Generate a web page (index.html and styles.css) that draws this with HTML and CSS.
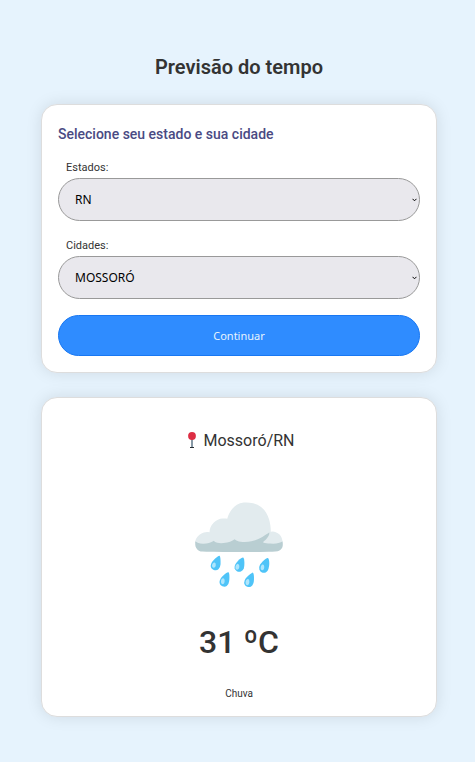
FILE: index.html
```html
<!DOCTYPE html>
<html lang="pt-BR">
<head>
  <meta charset="utf-8">
  <meta name="viewport" content="width=device-width, initial-scale=1">
  <title>Previsão do tempo</title>
  <link rel="stylesheet" href="styles.css">
</head>
<body>
  <main class="page">
    <h1 class="title">Previsão do tempo</h1>
    <form class="card search">
      <h2 class="subtitle">Selecione seu estado e sua cidade</h2>
      <label class="label" for="estado">Estados:</label>
      <div class="field">
        <select class="select" id="estado"><option>RN</option></select>
        <svg class="chevron" viewBox="0 0 5 4" aria-hidden="true"><path d="M.5 .8 2.5 2.8 4.5 .8"/></svg>
      </div>
      <label class="label" for="cidade">Cidades:</label>
      <div class="field">
        <select class="select" id="cidade"><option>MOSSORÓ</option></select>
        <svg class="chevron" viewBox="0 0 5 4" aria-hidden="true"><path d="M.5 .8 2.5 2.8 4.5 .8"/></svg>
      </div>
      <button class="button" type="button">Continuar</button>
    </form>
    <section class="card weather">
      <p class="place">
        <svg class="pin" viewBox="0 0 8 18" aria-hidden="true">
          <path class="pin-base" d="M2 15.5h4"/>
          <path class="pin-needle" d="M4 7v8"/>
          <circle class="pin-head" cx="4" cy="4" r="3.9"/>
        </svg>
        <span>Mossoró/RN</span>
      </p>
      <p class="icon">🌧️</p>
      <p class="temperature">31 ºC</p>
      <p class="condition">Chuva</p>
    </section>
  </main>
</body>
</html>
```

FILE: styles.css
```css
* {
  box-sizing: border-box;
  margin: 0;
}

body {
  min-height: 100vh;
  background: #e6f3fd;
  color: #333;
  font-family: Roboto, sans-serif;
}

.page {
  display: flex;
  flex-direction: column;
  gap: 24px;
  max-width: 640px;
  margin: 0 auto;
  padding: 55px 38px 45px 41px;
}

.title {
  margin-bottom: 1px;
  font-size: 20px;
  line-height: 24px;
  font-weight: 600;
  text-align: center;
}

.card {
  display: flex;
  flex-direction: column;
  padding: 16px;
  border: 1px solid #ddd;
  border-radius: 16px;
  background: #fff;
  box-shadow: 0 0 16px rgba(0, 0, 0, 0.1);
}

.subtitle {
  margin: 4px 0 18px;
  color: #4a4a83;
  font-size: 14px;
  line-height: 18px;
  font-weight: 500;
}

.label {
  padding: 0 8px;
  margin-bottom: 3px;
  font-size: 11px;
  line-height: 14px;
}

.field {
  position: relative;
  margin-bottom: 18px;
}

.field:last-of-type {
  margin-bottom: 16px;
}

.select {
  display: block;
  appearance: none;
  width: 100%;
  height: 43px;
  padding: 0 16px;
  border: 1px solid #999;
  border-radius: 24px;
  background-color: #e9e8ed;
  color: #000;
  font-family: "Noto Sans", sans-serif;
  font-size: 12px;
}

.chevron {
  position: absolute;
  top: 20px;
  right: 3px;
  width: 5px;
  height: 4px;
  fill: none;
  stroke: #000;
  pointer-events: none;
}

.button {
  height: 41px;
  border: 1px solid #1877f2;
  border-radius: 24px;
  background: #2f8cff;
  color: #e6f3fd;
  font-family: "Noto Sans", sans-serif;
  font-size: 11px;
}

.weather {
  align-items: center;
  padding-top: 32px;
}

.place {
  display: flex;
  align-items: center;
  gap: 8px;
  padding-left: 4px;
  font-size: 16px;
  line-height: 22px;
}

.pin {
  width: 8px;
  height: 18px;
}

.pin-head {
  fill: #dd2e44;
}

.pin-needle {
  stroke: #8899a6;
  stroke-width: 2;
}

.pin-base {
  stroke: #292f33;
}

.icon {
  margin: 41px 0 15px;
  font-family: "Noto Color Emoji", sans-serif;
  font-size: 80px;
  line-height: 104px;
}

.temperature {
  margin: 10px 0 26px;
  font-size: 32px;
  line-height: 40px;
  font-weight: 500;
}

.condition {
  font-size: 10px;
  line-height: 12px;
}
```
